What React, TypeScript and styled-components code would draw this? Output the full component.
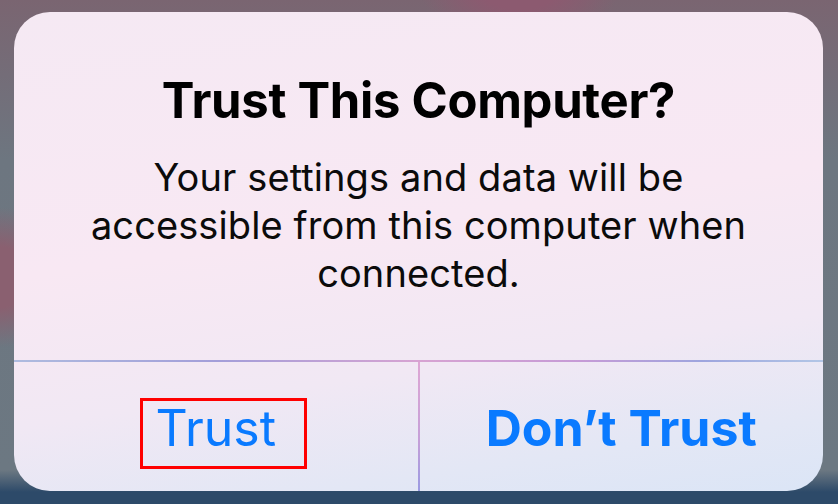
import React from "react";
import styled, { createGlobalStyle } from "styled-components";

const GlobalStyle = createGlobalStyle`
  html, body {
    margin: 0;
    padding: 0;
    background: #2d4a69;
  }
  body {
    font-family: Inter, "Noto Sans", "Liberation Sans", sans-serif;
    -webkit-font-smoothing: antialiased;
  }
`;

const Screen = styled.div`
  width: 838px;
  height: 504px;
  box-sizing: border-box;
  padding: 12px 15px 13px 14px;
  display: flex;
  background:
    radial-gradient(circle at 62% -10%, #8c5a70 0 60px, transparent 110px),
    radial-gradient(circle at 0% 55%, #8a6070 0 30px, transparent 70px),
    linear-gradient(
      to bottom,
      #7a6571 0px,
      #6d7680 160px,
      #6c7882 470px,
      #2d4a69 492px,
      #2d4a69 504px
    );
`;

const Alert = styled.div`
  flex: 1;
  display: flex;
  flex-direction: column;
  border-radius: 36px;
  overflow: hidden;
  background: linear-gradient(
    172deg,
    #f5e9f3 0%,
    #f8e8f3 45%,
    #f1e8f4 70%,
    #e3e7f5 88%,
    #dbe5f6 100%
  );
`;

const Content = styled.div`
  height: 348px;
  box-sizing: border-box;
  padding: 59px 50px 0;
  display: flex;
  flex-direction: column;
  align-items: center;
  text-align: center;
`;

const Title = styled.h1`
  margin: 0;
  font-size: 49px;
  line-height: 60px;
  font-weight: 700;
  letter-spacing: -0.3px;
  color: #000;
`;

const Message = styled.p`
  margin: 22px 0 0;
  max-width: 700px;
  font-size: 38px;
  line-height: 48px;
  font-weight: 400;
  letter-spacing: 0.1px;
  color: #0b0b0b;
`;

const Rule = styled.div`
  height: 2px;
  background: linear-gradient(
    90deg,
    #aebbdf 0%,
    #a39ed9 25%,
    #d7a3d2 50%,
    #c69bd6 70%,
    #9ea5de 85%,
    #b2c6e6 100%
  );
`;

const Actions = styled.div`
  flex: 1;
  display: grid;
  grid-template-columns: 1fr 2px 1fr;
`;

const Separator = styled.div`
  background: linear-gradient(to bottom, #dea7d4, #c6a0d8 60%, #9a9ae2);
`;

const ActionButton = styled.button<{ $bold?: boolean }>`
  border: none;
  background: transparent;
  padding: 3px 0 0;
  margin: 0;
  display: flex;
  align-items: center;
  justify-content: center;
  font-family: inherit;
  font-size: 50px;
  line-height: 60px;
  font-weight: ${(p) => (p.$bold ? 700 : 400)};
  color: #0a7aff;
  cursor: pointer;
`;

const Label = styled.span<{ $marked?: boolean }>`
  position: relative;
  ${(p) =>
    p.$marked &&
    `
    &::after {
      content: "";
      position: absolute;
      top: 0px;
      bottom: -11px;
      left: -15px;
      right: -31px;
      border: 3px solid #ff0000;
    }
  `}
`;

export default function App() {
  return (
    <>
      <GlobalStyle />
      <Screen>
        <Alert>
          <Content>
            <Title>Trust This Computer?</Title>
            <Message>
              Your settings and data will be accessible from this computer when
              connected.
            </Message>
          </Content>
          <Rule />
          <Actions>
            <ActionButton>
              <Label $marked>Trust</Label>
            </ActionButton>
            <Separator />
            <ActionButton $bold>
              <Label>Don’t Trust</Label>
            </ActionButton>
          </Actions>
        </Alert>
      </Screen>
    </>
  );
}
